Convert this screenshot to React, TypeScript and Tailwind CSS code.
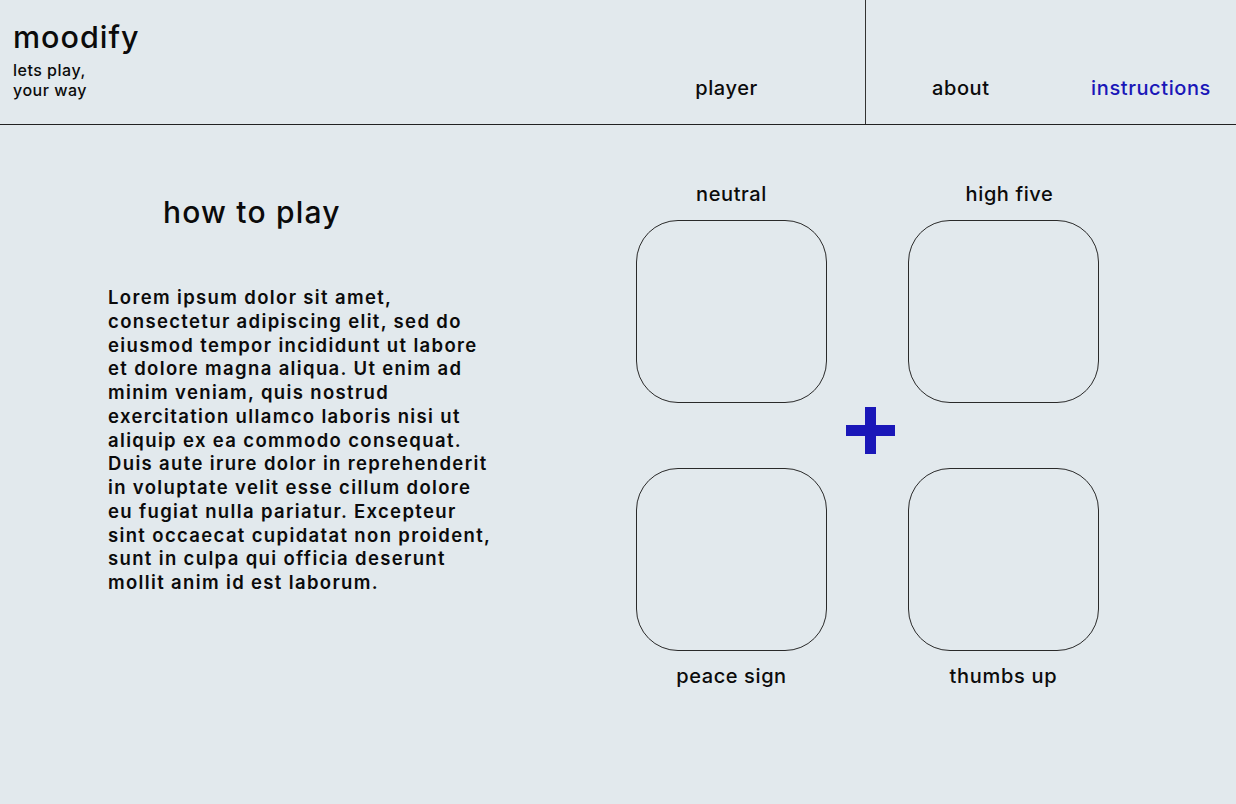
import React from 'react';

const lorem = [
    'Lorem ipsum dolor sit amet,',
    'consectetur adipiscing elit, sed do',
    'eiusmod tempor incididunt ut labore',
    'et dolore magna aliqua. Ut enim ad',
    'minim veniam, quis nostrud',
    'exercitation ullamco laboris nisi ut',
    'aliquip ex ea commodo consequat.',
    'Duis aute irure dolor in reprehenderit',
    'in voluptate velit esse cillum dolore',
    'eu fugiat nulla pariatur. Excepteur',
    'sint occaecat cupidatat non proident,',
    'sunt in culpa qui officia deserunt',
    'mollit anim id est laborum.',
];

function GestureBox() {
    return <div className="h-[183px] w-[191px] rounded-[42px] border border-[#2a2a2a]" />;
}

function PlusIcon() {
    return (
        <svg width="49" height="47" viewBox="0 0 49 47" className="block">
            <rect x="19" y="0" width="11" height="47" fill="#1a17b8" />
            <rect x="0" y="18" width="49" height="11" fill="#1a17b8" />
        </svg>
    );
}

export default function App() {
    return (
        <div className="min-h-[804px] w-full bg-[#e2e9ed] text-[#0b0b0b]" style={{ fontFamily: 'Inter, "Noto Sans", sans-serif' }}>
            {/* Header */}
            <header className="flex h-[125px] border-b border-[#222]">
                <div className="flex w-[866px] border-r border-[#333]">
                    <div className="w-[600px] pl-[13px] pt-[19px]">
                        <div className="text-[30.5px] font-medium leading-[36px] tracking-[1px]">moodify</div>
                        <div className="mt-[5px] text-[16px] font-medium leading-[20px] tracking-[0.5px]">
                            lets play,
                            <br />
                            your way
                        </div>
                    </div>
                    <div className="flex flex-1 items-end justify-center pb-[24px] pr-[12px]">
                        <span className="text-[20px] font-medium leading-[24px] tracking-[0.6px]">player</span>
                    </div>
                </div>
                <nav className="flex flex-1 items-end pb-[24px]">
                    <span className="ml-[66px] text-[20px] font-medium leading-[24px] tracking-[0.6px]">about</span>
                    <span className="ml-auto mr-[25px] text-[20px] font-medium leading-[24px] tracking-[0.6px] text-[#1a17b8]">instructions</span>
                </nav>
            </header>

            {/* Main */}
            <main className="flex">
                {/* Instructions text */}
                <section className="w-[636px] pl-[108px] pt-[70px]">
                    <h1 className="pl-[55px] text-[30px] font-medium leading-[34px] tracking-[1.2px]">how to play</h1>
                    <div className="mt-[57px] text-[18.5px] font-semibold leading-[23.75px] tracking-[1.35px]">
                        {lorem.map((line) => (
                            <div key={line}>{line}</div>
                        ))}
                    </div>
                </section>

                {/* Gesture grid */}
                <section className="grid grid-cols-[191px_81px_191px] pt-[57px]">
                    <div className="mb-[14px] text-center text-[20px] font-medium leading-[24px] tracking-[0.6px]">neutral</div>
                    <div />
                    <div className="mb-[14px] pl-[12px] text-center text-[20px] font-medium leading-[24px] tracking-[0.6px]">high five</div>

                    <GestureBox />
                    <div />
                    <GestureBox />

                    <div className="h-[65px]" />
                    <div className="flex h-[65px] items-start justify-center pl-[5px] pt-[4px]">
                        <PlusIcon />
                    </div>
                    <div className="h-[65px]" />

                    <GestureBox />
                    <div />
                    <GestureBox />

                    <div className="mt-[13px] text-center text-[20px] font-medium leading-[24px] tracking-[0.6px]">peace sign</div>
                    <div />
                    <div className="mt-[13px] text-center text-[20px] font-medium leading-[24px] tracking-[0.7px]">thumbs up</div>
                </section>
            </main>
        </div>
    );
}
